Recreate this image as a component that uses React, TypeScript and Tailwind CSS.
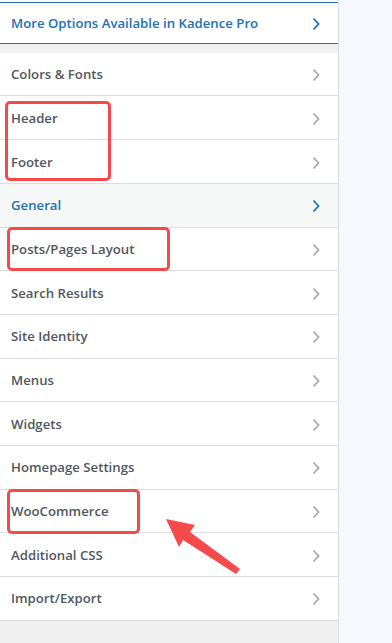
import React from 'react'

const sections = [
  { label: 'Colors & Fonts' },
  { label: 'Header' },
  { label: 'Footer' },
  { label: 'General', active: true },
  { label: 'Posts/Pages Layout' },
  { label: 'Search Results' },
  { label: 'Site Identity' },
  { label: 'Menus' },
  { label: 'Widgets' },
  { label: 'Homepage Settings' },
  { label: 'WooCommerce' },
  { label: 'Additional CSS' },
  { label: 'Import/Export' },
]

const Chevron: React.FC<{ color: string }> = ({ color }) => (
  <svg width="10" height="16" viewBox="0 0 10 16" fill="none">
    <path d="M2.5 2.5 L7.5 8 L2.5 13.5" stroke={color} strokeWidth="1.8" />
  </svg>
)

const App: React.FC = () => {
  return (
    <div
      className="flex w-[392px] h-[643px] overflow-hidden bg-[#f5f8fc]"
      style={{ fontFamily: '"Open Sans", "Noto Sans", sans-serif' }}
    >
      {/* Customizer sidebar */}
      <div className="relative flex flex-col w-[339px] h-full bg-[#f0f0f1] border-r border-[#dcdcde]">
        <div className="h-[2px] bg-white" />
        <div className="flex items-center justify-between h-[42px] pt-[2px] pl-[11px] pr-[17px] bg-white border-y border-[#2271b1]">
          <span className="text-[13.2px] font-semibold text-[#2271b1]">More Options Available in Kadence Pro</span>
          <Chevron color="#2271b1" />
        </div>
        <div className="h-[8.8px]" />
        <div className="flex flex-col">
          {sections.map((s) => (
            <div
              key={s.label}
              className={`flex items-center justify-between h-[43.7px] pt-[2px] pl-[11px] pr-[17px] border-b border-[#dcdcde] ${
                s.active ? 'bg-[#f6f7f7]' : 'bg-white'
              }`}
            >
              <span className={`text-[13.2px] font-semibold ${s.active ? 'text-[#2271b1]' : 'text-[#50575e]'}`}>
                {s.label}
              </span>
              <Chevron color={s.active ? '#2271b1' : '#a7aaad'} />
            </div>
          ))}
        </div>

        {/* Annotation boxes */}
        <div className="absolute left-[5px] top-[101px] w-[106px] h-[80px] border-[3px] border-[#f44a4a] rounded-[5px]" />
        <div className="absolute left-[7px] top-[227px] w-[163px] h-[44px] border-[3px] border-[#f44a4a] rounded-[5px]" />
        <div className="absolute left-[7px] top-[489px] w-[133px] h-[45px] border-[3px] border-[#f44a4a] rounded-[5px]" />
        <svg className="absolute left-0 top-0" width="339" height="643" viewBox="0 0 339 643">
          <polygon points="166,519 195,525 190,532 240,569 236,574 183,540 179,547" fill="#f44a4a" />
        </svg>
      </div>
      <div className="flex-1" />
    </div>
  )
}

export default App
